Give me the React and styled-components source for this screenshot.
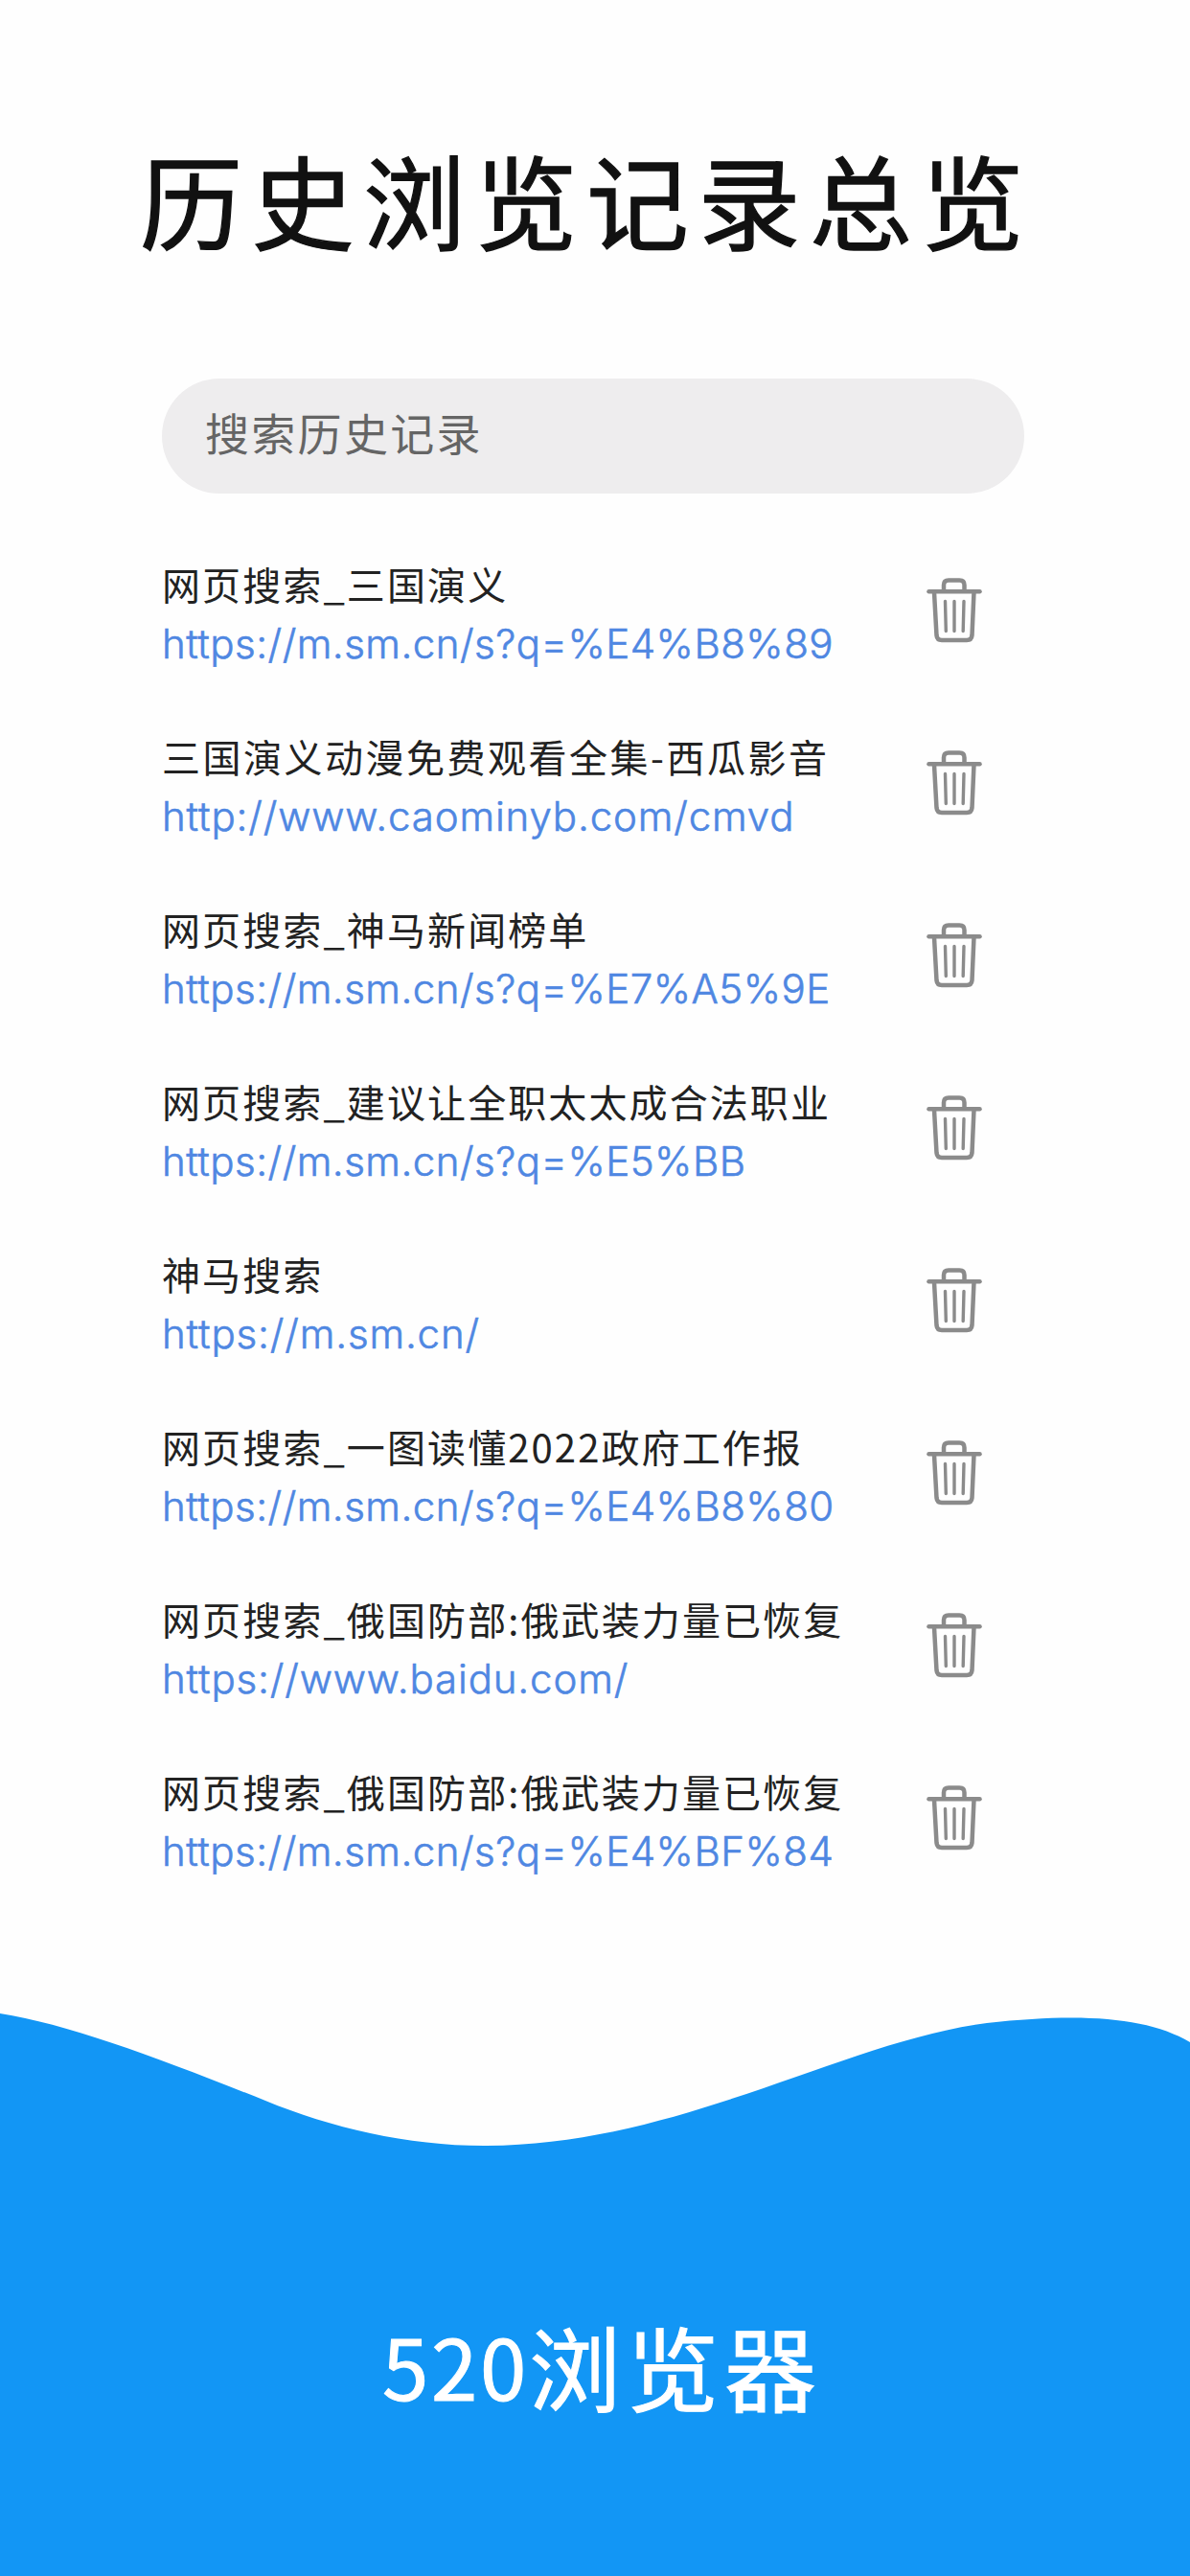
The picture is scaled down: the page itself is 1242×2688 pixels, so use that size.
import styled, { createGlobalStyle } from "styled-components";

const records = [
  { id: 1, title: "网页搜索_三国演义", url: "https://m.sm.cn/s?q=%E4%B8%89" },
  { id: 2, title: "三国演义动漫免费观看全集-西瓜影音", url: "http://www.caominyb.com/cmvd" },
  { id: 3, title: "网页搜索_神马新闻榜单", url: "https://m.sm.cn/s?q=%E7%A5%9E" },
  { id: 4, title: "网页搜索_建议让全职太太成合法职业", url: "https://m.sm.cn/s?q=%E5%BB" },
  { id: 5, title: "神马搜索", url: "https://m.sm.cn/" },
  { id: 6, title: "网页搜索_一图读懂2022政府工作报", url: "https://m.sm.cn/s?q=%E4%B8%80" },
  { id: 7, title: "网页搜索_俄国防部:俄武装力量已恢复", url: "https://www.baidu.com/" },
  { id: 8, title: "网页搜索_俄国防部:俄武装力量已恢复", url: "https://m.sm.cn/s?q=%E4%BF%84" },
];

const TrashIcon = () => (
  <svg width="58" height="68" viewBox="0 0 58 68" fill="none" stroke="#8b8b8b" strokeLinecap="round">
    <path d="M18 13V7.500Q18 2.500 23 2.500H34.500Q39.500 2.500 39.500 7.500V13" strokeWidth="4.500" />
    <path d="M2.500 14.200H55.500" strokeWidth="4.500" />
    <path d="M8 15L10.500 60Q11 65 16 65H42Q47 65 47.500 60L49.500 15" strokeWidth="4.500" />
    <path d="M19.500 24.500L20.300 55.500M29 24.500V55.500M39 24.500L38.200 55.500" strokeWidth="3.400" />
  </svg>
);

const App = () => {
  return (
    <Page>
      <GlobalStyle />
      <Heading>历史浏览记录总览</Heading>
      <Search type="text" placeholder="搜索历史记录" />
      <List>
        {records.map(({ id, title, url }) => (
          <Item key={id}>
            <div>
              <Title $wide={title.includes("-")}>{title}</Title>
              <Link $loose={!url.includes("?")}>{url}</Link>
            </div>
            <DeleteBtn aria-label="删除">
              <TrashIcon />
            </DeleteBtn>
          </Item>
        ))}
      </List>
      <Wave viewBox="0 0 1242 148">
        <path
          d="M0 0C72 11 172 49 277 91C345 119 425 138 505 138C708 138 880 29 1030 10C1130 -1 1198 4 1242 30V149H0Z"
          fill="#1296f5"
        />
      </Wave>
      <Footer>
        <Brand>
          <Digits>520</Digits>浏览器
        </Brand>
      </Footer>
    </Page>
  );
};

export default App;

const GlobalStyle = createGlobalStyle`
  * {
    box-sizing: border-box;
  }

  body {
    margin: 0;
    background-color: #ffffff;
    font-family: "Noto Sans CJK SC", sans-serif;
  }
`;

const Page = styled.main`
  display: flex;
  flex-direction: column;
  width: 1242px;
  height: 2688px;
  overflow: hidden;
  background-color: #fefefe;
`;

const Heading = styled.h1`
  margin: 127px 0 0 146px;
  height: 160px;
  font-size: 107px;
  font-weight: 400;
  line-height: 160px;
  letter-spacing: 9.500px;
  white-space: nowrap;
  color: #111111;
  -webkit-text-stroke: 1.300px #111111;
`;

const Search = styled.input`
  width: 900px;
  height: 120px;
  margin: 108px 0 0 169px;
  padding: 0 0 10px 45px;
  border: none;
  border-radius: 60px;
  font-family: inherit;
  font-size: 46px;
  letter-spacing: 2.300px;
  background-color: #eeedee;

  &::placeholder {
    color: #656565;
    opacity: 1;
  }
`;

const List = styled.ul`
  width: 856px;
  height: 1586px;
  flex: none;
  margin: 0 0 0 169px;
  padding: 64px 0 0;
  list-style: none;
`;

const Item = styled.li`
  display: flex;
  justify-content: space-between;
  height: 180px;
`;

const Title = styled.div`
  height: 62px;
  font-size: 40px;
  line-height: 60px;
  letter-spacing: ${({ $wide }) => ($wide ? "2.500px" : "2.100px")};
  white-space: nowrap;
  color: #222222;
`;

const Link = styled.div`
  height: 62px;
  font-family: Inter, sans-serif;
  font-size: 42px;
  font-weight: 300;
  line-height: 62px;
  letter-spacing: ${({ $loose }) => ($loose ? "0.850px" : "0.480px")};
  white-space: nowrap;
  color: #4f87e2;
  -webkit-text-stroke: 0.600px #4f87e2;
`;

const DeleteBtn = styled.button`
  width: 58px;
  height: 68px;
  margin-top: 24px;
  padding: 0;
  border: none;
  background: none;
  cursor: pointer;

  svg {
    display: block;
  }
`;

const Wave = styled.svg`
  display: block;
  flex: none;
  width: 1242px;
  height: 148px;
  overflow: visible;
`;

const Footer = styled.footer`
  display: flex;
  flex: 1;
  justify-content: center;
  padding: 143px 0 0 15px;
  background-color: #1296f5;
`;

const Brand = styled.div`
  height: 150px;
  font-size: 96px;
  font-weight: 400;
  line-height: 150px;
  letter-spacing: 6px;
  white-space: nowrap;
  color: #ffffff;
  -webkit-text-stroke: 1px #ffffff;
`;

const Digits = styled.span`
  font-size: 87px;
  letter-spacing: 2.700px;
  vertical-align: 4px;
`;
